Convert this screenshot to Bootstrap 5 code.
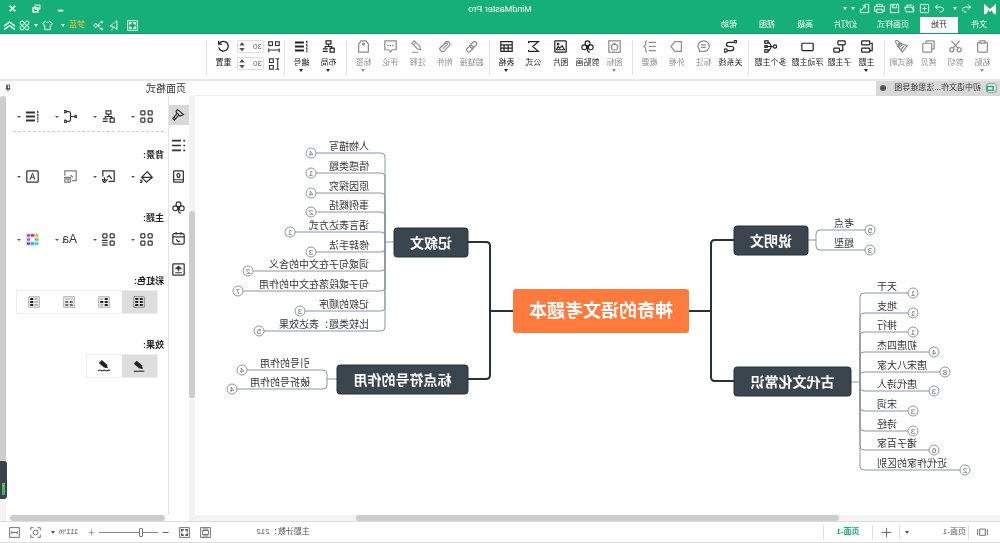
<!DOCTYPE html>
<html lang="zh-CN">
<head>
<meta charset="utf-8">
<meta name="viewport" content="width=device-width, initial-scale=1">
<title>MindMaster Pro</title>
<link href="https://cdn.jsdelivr.net/npm/bootstrap@5.3.0/dist/css/bootstrap.min.css" rel="stylesheet">
<style>
:root{--green:#16ae79;--ink:#333;--line:#e6e6e6}
body{font:8px/12px "Liberation Sans","Noto Sans CJK SC",sans-serif;color:var(--ink);background:#fff;overflow:hidden}
/* the whole window is shown flipped left to right */
.app{transform:scaleX(-1);height:100vh;min-width:960px}
button,input{font:inherit;color:inherit}
button{border:0;background:none;padding:0;line-height:inherit}
svg{display:block;flex:none}
.ic{width:12px;height:12px;fill:none;stroke:currentColor;stroke-width:1.5}
.ic .f{fill:currentColor;stroke:none}
.caret{width:0;height:0;border:2px solid transparent;border-top:3px solid currentColor;border-bottom:0;flex:none}
.green-head{background:var(--green);color:#fff;border-bottom:1px solid #0d9c68}
.titlebar{height:17px}
.quick{width:160px;padding-left:4px;gap:4px}
.quick .ic,.winbtns .ic,.tools .ic{width:11px;height:11px;stroke-width:1.3}
.quick .brand{width:12px;height:12px}
.winbtns{width:160px;padding-right:7px;gap:13px}
.tabs{height:16px}
.tabs a{color:#fff;text-decoration:none;line-height:16px;text-align:center}
.tabs .t2{width:38px}.tabs .t3{width:42px}.tabs .t4{width:54px}
.tabs a.on{background:#fff;color:#333}
.tools{gap:4px;padding-right:4px}
.gold{color:#f0c040}
.ribbon{height:47px;border-bottom:2px solid #e8e8e8;padding:6px 0 0 4px}
.rb{width:27px;color:#222}
.rb.wide{width:37px}
.rb.off{color:#8d8d8d}
.rb .ic{width:13px;height:13px}
.rb span{margin-top:4px;line-height:12px;white-space:nowrap}
.vr-line{width:1px;background:#e2e2e2;margin:0 4px 0 3px;height:35px}
.spin{width:27px;height:13px;border:1px solid #ddd;border-radius:2px;padding:0 1px}
.spin input{width:16px;border:0;padding:0;height:10px;color:#666;outline:0}
.doctab{background:#d8d8d8;width:124px;height:15px;padding-left:3px;gap:4px}
.strip{border-bottom:1px solid #eee;height:15px}
.dot{width:6px;height:6px;border-radius:50%;background:#555}
.canvas{overflow:hidden}
.hbar{height:6px;background:#f3f3f3}
.vbar{width:6px;background:#f3f3f3}
.thumb{background:#cdcdcd;border-radius:3px}
.side{width:195px}
.side h1{font-size:10px;line-height:15px;margin:0;padding-left:9px;font-weight:400}
.rail{width:20px;padding-top:9px;gap:11px}
.rail button{height:20px;width:20px}
.rail button.on{background:#d8d8d8}
.rail .ic,.opts .ic{width:13px;height:13px}
.panel{border-left:1px solid var(--line);padding:14px 7px 0 4px}
.opts{padding-left:11px;gap:25px;height:13px}
.opts button{width:13px;position:relative}
.opts .caret{position:absolute;left:18px;top:6px;border-width:2px;border-bottom:0;color:#555}
.dash{border-top:1px dashed #ccc;margin-top:8px}
.panel h2{font-size:9px;line-height:14px;font-weight:700;margin:0;color:#222}
.seg{margin:2px 0 0 6px;border:1px solid #eee;width:max-content}
.seg button{width:35px;height:22px}
.seg button.on{background:#dedede}
.widget{position:absolute;right:0;top:461px;width:7px;height:38px;background:#39434f;border-radius:3px 0 0 3px}
.widget i{display:block;margin:22px 2px 0;height:12px;background:linear-gradient(#7fb542,#1fb58a)}
.status{height:22px;border-top:1px solid #ddd;border-bottom:1px solid #ddd;color:#555}
.status .ic{width:11px;height:11px;stroke-width:1.2}
.status .vline{width:1px;height:14px;background:#ddd}
.pagebox{width:68px;padding:0 5px 0 2px}
.add{width:26px;padding-left:7px}
.pagetab{width:48px;color:var(--green)}
.count{margin-right:45px}
.zoombar{gap:10px;padding-right:9px}
.zoom{appearance:none;width:59px;height:9px;background:linear-gradient(#888,#888) center/100% 1px no-repeat;margin:0}
.zoom::-webkit-slider-thumb{appearance:none;width:4px;height:9px;border:1px solid #777;background:#fff;border-radius:1px}
.leaf{font-size:10px;fill:#333}
.num{font-size:8px;fill:#666;text-anchor:middle}
.topic{font-size:14px;font-weight:700;fill:#fff;text-anchor:middle}
.root{font-size:18px}
</style>
</head>
<body>
<svg width="0" height="0" class="position-absolute" aria-hidden="true"><defs>
<symbol id="logo" viewBox="0 0 16 16"><path fill="#fff" stroke="none" d="M0 1l8 7 8-7v14h-2l-3-3V9l-3 3-3-3v3l-3 3H0z"/></symbol>
<symbol id="undo" viewBox="0 0 16 16"><path d="M6 2L2 6l4 4M2 6h8c5 0 5 7 0 7H8"/></symbol>
<symbol id="redo" viewBox="0 0 16 16"><path d="M10 2l4 4-4 4M14 6H6c-5 0-5 7 0 7h2"/></symbol>
<symbol id="new" viewBox="0 0 16 16"><rect x="2" y="2" width="12" height="12" rx="1"/><path d="M8 5v6M5 8h6"/></symbol>
<symbol id="open" viewBox="0 0 16 16"><path d="M2 13V5l2-2h8v3M2 13l2-7h11l-2 7z"/></symbol>
<symbol id="save" viewBox="0 0 16 16"><path d="M2 2h12v12H2zM5 2v5h6V2M9 3v2"/></symbol>
<symbol id="print" viewBox="0 0 16 16"><path d="M4 5V2h8v3M4 12H1V5h14v7h-3M4 9h8v5H4z"/></symbol>
<symbol id="export" viewBox="0 0 16 16"><path d="M8 2H2v12h12V8M7 8V4h4M7 4l6 7"/></symbol>
<symbol id="min" viewBox="0 0 16 16"><path d="M4 11h8" stroke-width="2.5"/></symbol>
<symbol id="restore" viewBox="0 0 16 16"><rect x="3" y="3" width="7" height="6"/><rect x="6" y="7" width="7" height="6" stroke-width="2"/></symbol>
<symbol id="close" viewBox="0 0 16 16"><path d="M4 4l8 8M12 4l-8 8" stroke-width="2.4"/></symbol>
<symbol id="fit" viewBox="0 0 16 16"><rect x="1" y="1" width="14" height="14"/><path d="M4 7V4h3M9 4h3v3M12 9v3H9M7 12H4V9" stroke-width="2"/></symbol>
<symbol id="point" viewBox="0 0 16 16"><path d="M3 1v13l4-4 6-1zM8 10l3 5"/></symbol>
<symbol id="share" viewBox="0 0 16 16"><path d="M2 3h3l4 5-4 5H2M5 8h4"/><circle cx="12" cy="8" r="2.5"/><circle cx="3" cy="3" r="1.2"/><circle cx="3" cy="13" r="1.2"/></symbol>
<symbol id="shirt" viewBox="0 0 16 16"><path d="M5 2L1 5l2 3 1-1v7h8V7l1 1 2-3-4-3c-1 2-5 2-6 0z"/></symbol>
<symbol id="four" viewBox="0 0 16 16"><circle cx="4.500" cy="4.500" r="3"/><circle cx="11.500" cy="4.500" r="3"/><circle cx="4.500" cy="11.500" r="3"/><circle cx="11.500" cy="11.500" r="3"/></symbol>
<symbol id="up" viewBox="0 0 16 16"><path d="M0 9l8-6 8 6M0 14l8-6 8 6" stroke-width="2"/></symbol>
<symbol id="paste" viewBox="0 0 16 16"><rect x="2" y="3" width="12" height="12" rx="1"/><rect x="5" y="1" width="6" height="3" fill="#fff"/></symbol>
<symbol id="cut" viewBox="0 0 16 16"><circle cx="3.500" cy="12" r="2.500"/><circle cx="12.500" cy="12" r="2.500"/><path d="M3 1l8 9M13 1l-8 9"/></symbol>
<symbol id="copy" viewBox="0 0 16 16"><rect x="1" y="1" width="10" height="10" rx="1"/><rect x="4" y="4" width="11" height="11" rx="1" fill="#fff"/></symbol>
<symbol id="brush" viewBox="0 0 16 16"><path d="M1 7l10-3 2 3-6 8zM5 8l4 4"/><path class="f" d="M9 4l5-4 2 2-4 5zM8 4l5 4-2 1-4-3z"/></symbol>
<symbol id="topic" viewBox="0 0 16 16"><rect x="4" y="1" width="10" height="5" rx="1"/><rect x="4" y="10" width="10" height="5" rx="1"/><path d="M4 4H1v9h3"/></symbol>
<symbol id="sub" viewBox="0 0 16 16"><rect x="1" y="1" width="9" height="5" rx="1"/><rect x="8" y="10" width="7" height="5" rx="1"/><path d="M4 6v7h4"/></symbol>
<symbol id="float" viewBox="0 0 16 16"><rect x="1" y="4" width="14" height="9" rx="1"/></symbol>
<symbol id="multi" viewBox="0 0 16 16"><circle cx="2.500" cy="8" r="2"/><path d="M5 8h7M6 8c3 0 1-5 5-5M6 8c3 0 1 5 5 5"/><rect x="11" y="1" width="4" height="3"/><rect x="12" y="7" width="3" height="2"/><rect x="11" y="12" width="4" height="3"/></symbol>
<symbol id="rel" viewBox="0 0 16 16"><path d="M4 3h6c4 0 4 5 0 5H7c-4 0-4 5 0 5h5"/><circle class="f" cx="2" cy="2" r="1.500"/><circle class="f" cx="14" cy="13" r="2"/></symbol>
<symbol id="callout" viewBox="0 0 16 16"><path d="M13 15v-3a7 6.500 0 1 0-4 2h4M5 6h6M5 9h6"/></symbol>
<symbol id="bound" viewBox="0 0 16 16"><path d="M2 2h8l5 6-5 6H2z"/></symbol>
<symbol id="summary" viewBox="0 0 16 16"><path d="M0 3h9M0 8h9M0 13h9M11 1c3 0 1 4 2 5l2 2-2 2c-1 1 1 5-2 5"/></symbol>
<symbol id="mark1" viewBox="0 0 16 16"><rect x="1" y="1" width="14" height="14"/><path d="M8 4l4 3-1 5H5L4 7z"/></symbol>
<symbol id="clover" viewBox="0 0 16 16"><g stroke-width="1.400"><circle cx="8" cy="4" r="3"/><circle cx="4" cy="9" r="3"/><circle cx="12" cy="9" r="3"/><path d="M8 7v5c0 2-1 3-3 3"/></g></symbol>
<symbol id="pic" viewBox="0 0 16 16"><rect x="1" y="1" width="14" height="14" rx="1"/><path class="f" d="M3 12l3-5 3 3 2-2 2 4z"/><circle class="f" cx="11" cy="5" r="1"/></symbol>
<symbol id="sum" viewBox="0 0 16 16"><path d="M14 4V2H2l7 6-7 6h12v-2"/></symbol>
<symbol id="table" viewBox="0 0 16 16"><path d="M1 2h14v12H1zM1 6h14M1 10h14M6 6v8M11 6v8"/></symbol>
<symbol id="link" viewBox="0 0 16 16"><rect x="1" y="3" width="9" height="5" rx="2" transform="rotate(45 5 6)"/><rect x="6" y="8" width="9" height="5" rx="2" transform="rotate(45 10 10)"/></symbol>
<symbol id="clip" viewBox="0 0 16 16"><path d="M12 9L7 3C4 0 0 4 2 7l6 6c3 3 8-1 5-4L7 4C5 3 4 5 5 6l5 5"/></symbol>
<symbol id="note" viewBox="0 0 16 16"><path d="M4 12l1-4 7-7 3 3-7 7zM10 3l3 3M7 15h8" stroke-width="1.300"/></symbol>
<symbol id="comment" viewBox="0 0 16 16"><path d="M1 1h14v11h-5l-2 3-2-3H1z"/><path d="M4 7h8" stroke-dasharray="2 1"/></symbol>
<symbol id="tag" viewBox="0 0 16 16"><path d="M2 15V5l3-4h6l3 4v10z"/><circle class="f" cx="8" cy="5" r="1.200"/></symbol>
<symbol id="layout" viewBox="0 0 16 16"><rect x="5" y="1" width="6" height="4"/><path d="M8 5v3M4 11V8h8v2"/><rect x="1" y="10" width="5" height="5"/><path d="M9 11h6M9 14h6"/></symbol>
<symbol id="list" viewBox="0 0 16 16"><path d="M5 3h11M5 8h11M5 13h11" stroke-width="2.400"/><path d="M1.500 1v14" stroke-dasharray="3 1"/></symbol>
<symbol id="hgap" viewBox="0 0 16 16"><rect x="1" y="1" width="5" height="5"/><rect x="10" y="1" width="5" height="5"/><path d="M1 12h14M1 10v5M15 10v5"/></symbol>
<symbol id="vgap" viewBox="0 0 16 16"><rect x="9" y="1" width="5" height="5"/><rect x="9" y="10" width="5" height="5"/><path d="M3 1v14M1 1h5M1 15h5"/></symbol>
<symbol id="reset" viewBox="0 0 16 16"><path d="M13 4a6 6 0 1 0 1 5M14 1v4h-4"/></symbol>
<symbol id="updown" viewBox="0 0 6 12"><path class="f" d="M0 5l3-4 3 4zM0 7.500l3 4 3-4z" fill="#555" stroke="none"/></symbol>
<symbol id="pin" viewBox="0 0 16 16"><path d="M5 2h6v8H5zM3 10h10M8 10v5M9 3v6"/></symbol>
<symbol id="doc" viewBox="0 0 16 16"><rect x="1" y="2" width="13" height="12" rx="4" fill="#f7f7f7" stroke="#999"/><rect x="5" y="6" width="8" height="5" fill="#fff" stroke="#16ae79" stroke-width="2"/></symbol>
<symbol id="paint" viewBox="0 0 16 16"><path d="M7 2l7 6-4 2-2-1-5 6-2-2 5-6-1-3zM6 6l4 4M2 11l3 3" transform="matrix(-1 0 0 1 16 0)"/></symbol>
<symbol id="bullets" viewBox="0 0 16 16"><path d="M5 2h11M5 8h11M5 14h11M0 2h2M0 8h2M0 14h2" stroke-width="2"/></symbol>
<symbol id="book" viewBox="0 0 16 16"><rect x="2" y="1" width="12" height="14" rx="1"/><path d="M2 12h12M8 4l2 2-1 3H7L6 6z"/></symbol>
<symbol id="cal" viewBox="0 0 16 16"><rect x="1" y="2" width="14" height="13" rx="2"/><path d="M1 6h14M5 0v3M11 0v3M6 11l2 1 3-3"/></symbol>
<symbol id="upload" viewBox="0 0 16 16"><rect x="1" y="1" width="14" height="14" rx="1"/><path d="M8 10V6M4 12h8"/><path class="f" d="M5 7l3-3 3 3z"/></symbol>
<symbol id="squares" viewBox="0 0 16 16"><rect x="1" y="1" width="5" height="5" rx="1"/><rect x="10" y="1" width="5" height="5" rx="1"/><rect x="1" y="10" width="5" height="5" rx="1"/><rect x="10" y="10" width="5" height="5" rx="1"/></symbol>
<symbol id="branch" viewBox="0 0 16 16"><path d="M2 8h6M14 2h-4q-2 0-2 2v8q0 2 2 2h4"/><circle class="f" cx="1.500" cy="8" r="1.500"/><circle class="f" cx="14.500" cy="2" r="1.500"/><circle class="f" cx="14.500" cy="14" r="1.500"/></symbol>
<symbol id="fill" viewBox="0 0 16 16"><path d="M7 2l7 7-6 6-7-6zM2 9h12"/><circle class="f" cx="15" cy="14" r="1.500"/></symbol>
<symbol id="imgdown" viewBox="0 0 16 16"><path d="M8 14H1V1h14v7M4 11l3-4 3 2"/><path d="M13 9v5"/><path class="f" d="M10 12h6l-3 4z"/></symbol>
<symbol id="imgdel" viewBox="0 0 16 16"><path d="M6 13H1V1h14v6M5 9l3-3"/><path d="M7 9h9M8 11h7v4H8zM11 11v4"/></symbol>
<symbol id="abox" viewBox="0 0 16 16"><rect x="1" y="1" width="14" height="14" rx="1"/><path d="M5 12l3-8 3 8M6 9h4" stroke-width="1.200"/></symbol>
<symbol id="sqlist" viewBox="0 0 16 16"><rect x="1" y="1" width="5" height="5" rx="1"/><rect x="10" y="1" width="5" height="5" rx="1"/><rect x="1" y="10" width="5" height="5" rx="1"/><path d="M9 9h7M9 12h7M9 15h7"/></symbol>
<symbol id="colors" viewBox="0 0 16 16"><rect width="16" height="16" fill="#e4e9fa" stroke="none"/><g stroke-width="3"><path stroke="#f5b423" d="M1 3h4"/><path stroke="#e24" d="M6 3h4"/><path stroke="#c3c" d="M11 3h4"/><path stroke="#6c3" d="M1 8h4"/><path stroke="#fff" d="M6 8h4"/><path stroke="#86e" d="M11 8h4"/><path stroke="#3cc" d="M1 13h4"/><path stroke="#1ae" d="M6 13h4"/><path stroke="#64e" d="M11 13h4"/></g></symbol>
<symbol id="rain" viewBox="0 0 16 16"><rect x="1" y="1" width="14" height="14" fill="#ddd" stroke="#777" stroke-width="1"/><path d="M3 4h4M3 8h4M3 12h4M9 4h4M9 8h4M9 12h4" stroke-width="2.500" stroke="#222"/></symbol>
<symbol id="rain2" viewBox="0 0 16 16"><rect x="1" y="1" width="14" height="14" fill="#eee" stroke="#999" stroke-width="1"/><path d="M3 4h4M3 8h4M9 8h4M3 12h4" stroke-width="2.500" stroke="#222"/><path d="M9 4h4M9 12h4" stroke="#888"/></symbol>
<symbol id="rain3" viewBox="0 0 16 16"><rect x="1" y="1" width="14" height="14" fill="#eee" stroke="#999" stroke-width="1"/><path d="M3 8h4M3 12h4M9 8h4M9 12h4" stroke-width="2" stroke="#444"/><path d="M3 4h10" stroke="#bbb"/></symbol>
<symbol id="rain4" viewBox="0 0 16 16"><rect x="1" y="1" width="14" height="14" fill="#eee" stroke="#999" stroke-width="1"/><path d="M9 4h4M9 8h4M9 12h4" stroke-width="2.500" stroke="#222"/><path d="M3 4h4M3 8h4M3 12h4" stroke="#777"/></symbol>
<symbol id="pen" viewBox="0 0 16 16"><path fill="#222" stroke="none" d="M11 1l4 4-7 6-5 1 1-5z"/><path d="M1 15h14"/></symbol>
<symbol id="pen2" viewBox="0 0 16 16"><path fill="#222" stroke="none" d="M11 0l4 4-7 6-5 1 1-5z"/><path d="M0 14c3-2 3 2 6 0s3 2 6 0 2 1 4 0"/></symbol>
<symbol id="pages" viewBox="0 0 16 16"><rect x="4" y="3" width="8" height="9"/><path d="M1 3v9M15 3v9"/></symbol>
<symbol id="plus" viewBox="0 0 16 16"><path d="M8 1v14M1 8h14"/></symbol>
<symbol id="minus" viewBox="0 0 16 16"><path d="M1 8h14" stroke-width="2"/></symbol>
<symbol id="page1" viewBox="0 0 16 16"><rect x="1" y="1" width="14" height="14"/><rect x="4" y="5" width="8" height="6"/><path d="M4 3h8M4 13h8"/></symbol>
<symbol id="focus" viewBox="0 0 16 16"><path d="M1 5V1h4M11 1h4v4M15 11v4h-4M5 15H1v-4"/><circle cx="8" cy="8" r="3.500"/></symbol>
<symbol id="fitw" viewBox="0 0 16 16"><rect x="1" y="1" width="14" height="14"/><path d="M4 8h8M4 6v4M12 6v4"/></symbol>
</defs></svg>

<div class="app d-flex flex-column position-relative">
<header class="green-head">
  <div class="titlebar d-flex align-items-center justify-content-between">
    <div class="quick d-flex align-items-center">
      <svg class="ic brand me-2"><use href="#logo"/></svg>
      <button aria-label="撤销"><svg class="ic"><use href="#undo"/></svg></button><i class="caret"></i>
      <button aria-label="重做" class="ms-1"><svg class="ic"><use href="#redo"/></svg></button>
      <button aria-label="新建"><svg class="ic"><use href="#new"/></svg></button>
      <button aria-label="打开"><svg class="ic"><use href="#open"/></svg></button>
      <button aria-label="保存"><svg class="ic"><use href="#save"/></svg></button>
      <button aria-label="打印"><svg class="ic"><use href="#print"/></svg></button>
      <button aria-label="导出"><svg class="ic"><use href="#export"/></svg></button><i class="caret"></i><i class="caret"></i>
    </div>
    <span style="font-size:9px">MindMaster Pro</span>
    <div class="winbtns d-flex align-items-center justify-content-end">
      <button aria-label="最小化"><svg class="ic"><use href="#min"/></svg></button>
      <button aria-label="还原"><svg class="ic"><use href="#restore"/></svg></button>
      <button aria-label="关闭"><svg class="ic"><use href="#close"/></svg></button>
    </div>
  </div>
  <div class="d-flex justify-content-between">
    <nav class="tabs d-flex">
      <a href="#" class="t3">文件</a><a href="#" class="t2 on">开始</a><a href="#" class="t4">页面样式</a><a href="#" class="t3">幻灯片</a><a href="#" class="t2">高级</a><a href="#" class="t2">视图</a><a href="#" class="t2">帮助</a>
    </nav>
    <div class="tools d-flex align-items-center">
      <button aria-label="适应"><svg class="ic"><use href="#fit"/></svg></button>
      <button aria-label="选择" class="ms-1"><svg class="ic"><use href="#point"/></svg></button>
      <button aria-label="分享" class="me-1"><svg class="ic"><use href="#share"/></svg></button>
      <button class="gold">梦蓝</button><i class="caret"></i>
      <button aria-label="主题" class="ms-1"><svg class="ic"><use href="#shirt"/></svg></button><i class="caret"></i>
      <button aria-label="应用"><svg class="ic"><use href="#four"/></svg></button>
      <button aria-label="收起"><svg class="ic"><use href="#up"/></svg></button>
    </div>
  </div>
</header>

<div class="ribbon d-flex" id="ribbon"></div>

<main class="d-flex flex-grow-1" style="min-height:0">
  <section class="d-flex flex-column flex-grow-1" style="min-width:0">
    <div class="strip"><div class="doctab d-flex align-items-center"><svg class="ic"><use href="#doc"/></svg><span>初中语文作...法思维导图</span><i class="dot ms-1"></i></div></div>
    <div class="canvas flex-grow-1"><svg id="map" width="805" height="420" viewBox="0 96 805 420" fill="none"></svg></div>
    <div class="hbar"><div class="thumb h-100" style="margin-left:20%;width:60%"></div></div>
  </section>
  <aside class="side d-flex flex-column">
    <div class="d-flex justify-content-between pe-1"><h1>页面格式</h1><button aria-label="固定"><svg class="ic" style="width:8px"><use href="#pin"/></svg></button></div>
    <div class="d-flex flex-grow-1">
      <div class="vbar d-flex flex-column"><div style="height:27%"></div><div class="thumb" style="height:44%"></div></div>
      <div class="rail d-flex flex-column" id="rail"></div>
      <div class="flex-grow-1 d-flex flex-column justify-content-between">
        <div class="panel flex-grow-1">
          <div class="opts d-flex" data-icons="squares,layout,branch,list"></div>
          <div class="dash"></div>
          <h2 class="mt-3">背景:</h2>
          <div class="opts d-flex mt-2" data-icons="fill,imgdown,-imgdel,abox"></div>
          <h2 class="mt-4 pt-1">主题:</h2>
          <div class="opts d-flex mt-2" data-icons="squares,sqlist,Aa,colors"></div>
          <h2 class="mt-4 pt-1">彩虹色:</h2>
          <div class="seg d-flex" data-icons="rain,rain2,rain3,rain4"></div>
          <h2 class="mt-4">效果:</h2>
          <div class="seg d-flex" data-icons="pen,pen2"></div>
        </div>
        <div class="hbar bg-white"><div class="thumb h-100 ms-1 me-1"></div></div>
      </div>
      <div class="vbar"><div class="thumb" style="height:88%"></div></div>
    </div>
  </aside>
</main>

<footer class="status d-flex align-items-center">
  <button class="ms-2 me-1 px-1" aria-label="页面列表"><svg class="ic"><use href="#pages"/></svg></button><i class="vline"></i>
  <button class="pagebox d-flex align-items-center justify-content-between"><span>页面-1</span><i class="caret"></i></button><i class="vline"></i>
  <button class="add" aria-label="添加页面"><svg class="ic"><use href="#plus"/></svg></button><i class="vline"></i>
  <button class="pagetab fw-bold">页面-1</button><i class="vline"></i>
  <span class="count ms-auto">主题计数：212</span>
  <div class="zoombar d-flex align-items-center">
    <button aria-label="整页"><svg class="ic"><use href="#page1"/></svg></button>
    <button aria-label="全屏"><svg class="ic"><use href="#fit"/></svg></button>
    <div class="d-flex align-items-center gap-1">
      <button aria-label="缩小"><svg class="ic" style="width:7px"><use href="#minus"/></svg></button>
      <input type="range" class="zoom" min="0" max="100" value="27" aria-label="缩放">
      <button aria-label="放大"><svg class="ic" style="width:7px"><use href="#plus"/></svg></button>
    </div>
    <button class="d-flex align-items-center gap-1">111%<i class="caret"></i></button>
    <button aria-label="居中"><svg class="ic"><use href="#focus"/></svg></button>
    <button aria-label="适应宽度"><svg class="ic"><use href="#fitw"/></svg></button>
  </div>
</footer>
<div class="widget"><i></i></div>
</div>

<script src="https://cdn.jsdelivr.net/npm/bootstrap@5.3.0/dist/js/bootstrap.bundle.min.js"></script>
<script>
const icon = n => `<svg class="ic"><use href="#${n}"/></svg>`;
// ribbon buttons: [label, icon, flags] with o = disabled, d = drop-down, w = wide
const groups = [
 [['粘贴','paste','od'],['剪切','cut','o'],['拷贝','copy','o'],['格式刷','brush','o']],
 [['主题','topic','d'],['子主题','sub',''],['浮动主题','float','w'],['多个主题','multi','w']],
 [['关系线','rel',''],['标注','callout','o'],['外框','bound','o'],['概要','summary','o']],
 [['图标','mark1','od'],['剪贴画','clover',''],['图片','pic',''],['公式','sum',''],['表格','table','d']],
 [['超链接','link','o'],['附件','clip','o'],['注释','note','o'],['评论','comment','o'],['标签','tag','od']],
 [['布局','layout','d'],['编号','list','d']]];
const rb = ([t,i,f]) => `<button class="rb d-flex flex-column align-items-center ${f.includes('o')?'off':''} ${f.includes('w')?'wide':''}">${icon(i)}<span>${t}</span>${f.includes('d')?'<i class="caret"></i>':''}</button>`;
const spin = (i,l) => `<label class="d-flex align-items-center gap-1">${icon(i)}<span class="spin d-flex align-items-center justify-content-between"><input value="30" aria-label="${l}"><svg class="ic" style="width:6px;height:11px"><use href="#updown"/></svg></span></label>`;
const bar = '<i class="vr-line"></i>';
document.getElementById('ribbon').innerHTML = groups.map(g=>g.map(rb).join('')).join(bar)+bar+
 `<div class="d-flex flex-column gap-1">${spin('hgap','水平间距')}${spin('vgap','垂直间距')}</div>`+rb(['重置','reset',''])+bar;
document.getElementById('rail').innerHTML = ['paint','bullets','book','clover','cal','upload'].map((n,i)=>`<button class="d-flex align-items-center justify-content-center ${i?'':'on'}" aria-label="${n}">${icon(n)}</button>`).join('');
document.querySelectorAll('.opts').forEach(e=>e.innerHTML=e.dataset.icons.split(',').map(n=>{
 const off=n[0]=='-'; n=n.replace('-','');
 return `<button aria-label="${n}" class="${off?'text-black-50':''}">${n=='Aa'?'<span style="font-size:12px">Aa</span>':icon(n)}${off?'':'<i class="caret"></i>'}</button>`}).join(''));
document.querySelectorAll('.seg').forEach(e=>e.innerHTML=e.dataset.icons.split(',').map((n,i)=>`<button aria-label="${n}" class="d-flex align-items-center justify-content-center ${i?'':'on'}">${icon(n)}</button>`).join(''));

// mind map: dir -1 grows left, 1 grows right; leaves are [text, count, line y, badge x]
const topics = [
 {t:'说明文',x:192,y:226,w:74,dir:-1,trunk:184,tx:166,mid:240,leaves:[['考点',5,230,130],['题型',3,250,130]]},
 {t:'古代文化常识',x:149,y:367,w:117,dir:-1,trunk:140,tx:123,mid:382,leaves:[['天干',1,293,87],['地支',1,313,87],['排行',1,332,87],['初唐四杰',4,352,66],['唐宋八大家',8,372,55],['唐代诗人',3,391,66],['宋词',3,411,87],['诗经',3,431,87],['诸子百家',6,450,66],['近代作家的区别',2,470,35]]},
 {t:'记叙文',x:532,y:228,w:74,dir:1,trunk:615,tx:631,mid:242,leaves:[['人物描写',4,153,689],['情感类题',1,173,689],['原因探究',4,193,689],['事例概括',2,212,689],['语言表达方式',1,232,710],['修辞手法',3,252,689],['词或句子在文中的含义',2,271,752],['句子或段落在文中的作用',7,291,762],['记叙的顺序',3,311,700],['比较类题：表达效果',5,331,741]]},
 {t:'标点符号的作用',x:532,y:365,w:131,dir:1,trunk:673,tx:690,mid:379,leaves:[['引号的作用',4,370,758],['破折号的作用',4,389,768]]}];
let s = '<g stroke="#24323b" stroke-width="2"><path d="M311 311H289M266 240h19q4 0 4 4v133q0 4-4 4h-19M487 311h23M532 242h-18q-4 0-4 4v129q0 4 4 4h18"/></g>';
for (const p of topics) {
  const edge = p.dir<0 ? p.x : p.x+p.w, d = p.dir;
  s += `<g stroke="#8b959d"><path d="M${edge} ${p.mid}H${p.trunk}"/>`;
  for (const [t,n,y,bx] of p.leaves) {
    const v = y<p.mid ? 4 : -4;
    s += `<path d="M${p.trunk} ${p.mid}V${y+v}q0 ${-v} ${4*d} ${-v}H${bx-5*d}"/><circle cx="${bx}" cy="${y}" r="5"/>`;
  }
  s += '</g>';
  for (const [t,n,y,bx] of p.leaves)
    s += `<text class="leaf" x="${p.tx}" y="${y-3}" text-anchor="${d<0?'end':'start'}">${t}</text><text class="num" x="${bx}" y="${y+3}">${n}</text>`;
  s += `<rect x="${p.x}" y="${p.y}" width="${p.w}" height="29" rx="3" fill="#3a454e" stroke="#24323b"/><text class="topic" x="${p.x+p.w/2}" y="${p.y+20}">${p.t}</text>`;
}
s += '<rect x="311" y="289" width="176" height="44" rx="3" fill="#ff7a3d"/><text class="topic root" x="399" y="317">神奇的语文考题本</text>';
document.getElementById('map').innerHTML = s;
</script>
</body>
</html>
